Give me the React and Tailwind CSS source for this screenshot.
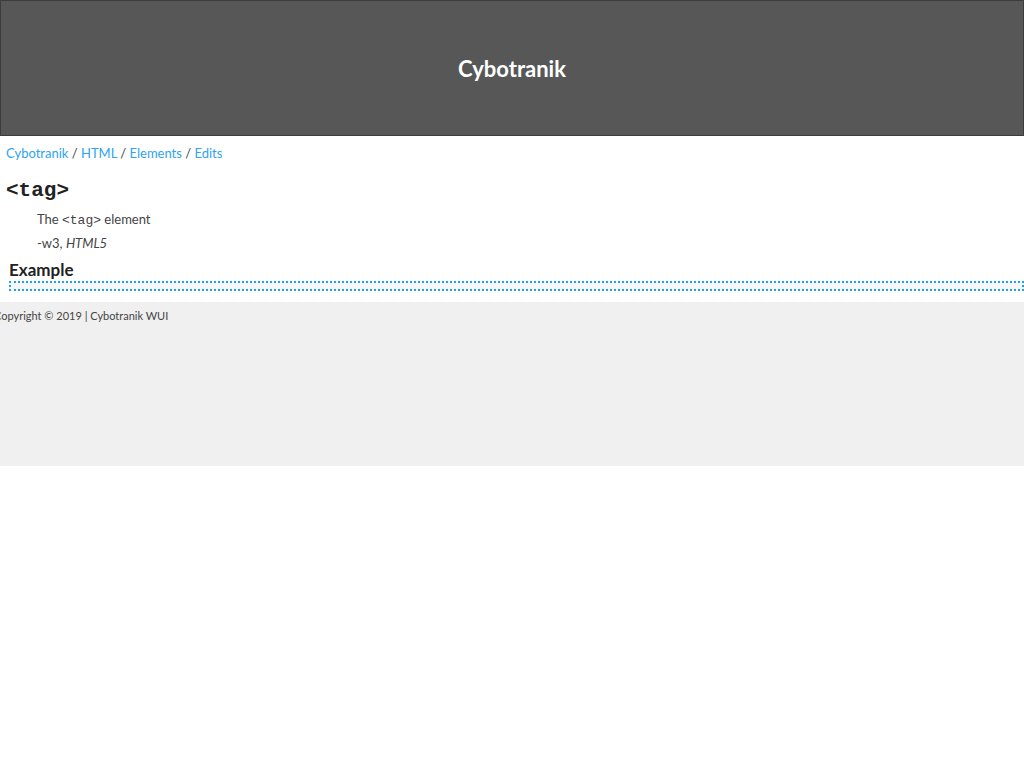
import React from 'react';

const font = { fontFamily: 'Lato, "Open Sans", sans-serif' };
const mono = { fontFamily: '"Liberation Mono", monospace' };

export default function App() {
  return (
    <div className="min-h-screen bg-white text-[#333]" style={font}>
      <header className="h-[136px] bg-[#575757] border border-[#3c3c3c] flex items-center justify-center">
        <h1 className="text-[22px] font-bold text-white">Cybotranik</h1>
      </header>

      <nav className="px-[6px] pt-[8px] text-[13px] text-[#444]">
        <a className="text-[#2ea3f2]">Cybotranik</a> / <a className="text-[#2ea3f2]">HTML</a> /{' '}
        <a className="text-[#2ea3f2]">Elements</a> / <a className="text-[#2ea3f2]">Edits</a>
      </nav>

      <main className="pt-[15px]">
        <h2 className="px-[6px] text-[21px] font-bold text-[#222] leading-[24px]" style={mono}>
          &lt;tag&gt;
        </h2>
        <div className="pl-[37px] pt-[4px] text-[13px] text-[#444]">
          <p className="h-[24px] leading-[24px]">
            The <code className="leading-none" style={mono}>&lt;tag&gt;</code> element
          </p>
          <p className="h-[24px] leading-[24px]">
            -w3, <i>HTML5</i>
          </p>
        </div>
        <h3 className="pl-[9px] pt-[5px] text-[17px] font-bold text-[#222] leading-[20px]">Example</h3>
        <div className="ml-[9px] mt-[1px] h-[10px] border-2 border-dotted border-[#1ea1f1] bg-[#f7f7f7]" />
      </main>

      <footer className="mt-[11px] h-[164px] bg-[#f0f0f0] -ml-[6px] pt-[6px] text-[11px] text-[#444]">
        Copyright © 2019 | Cybotranik WUI
      </footer>
    </div>
  );
}
